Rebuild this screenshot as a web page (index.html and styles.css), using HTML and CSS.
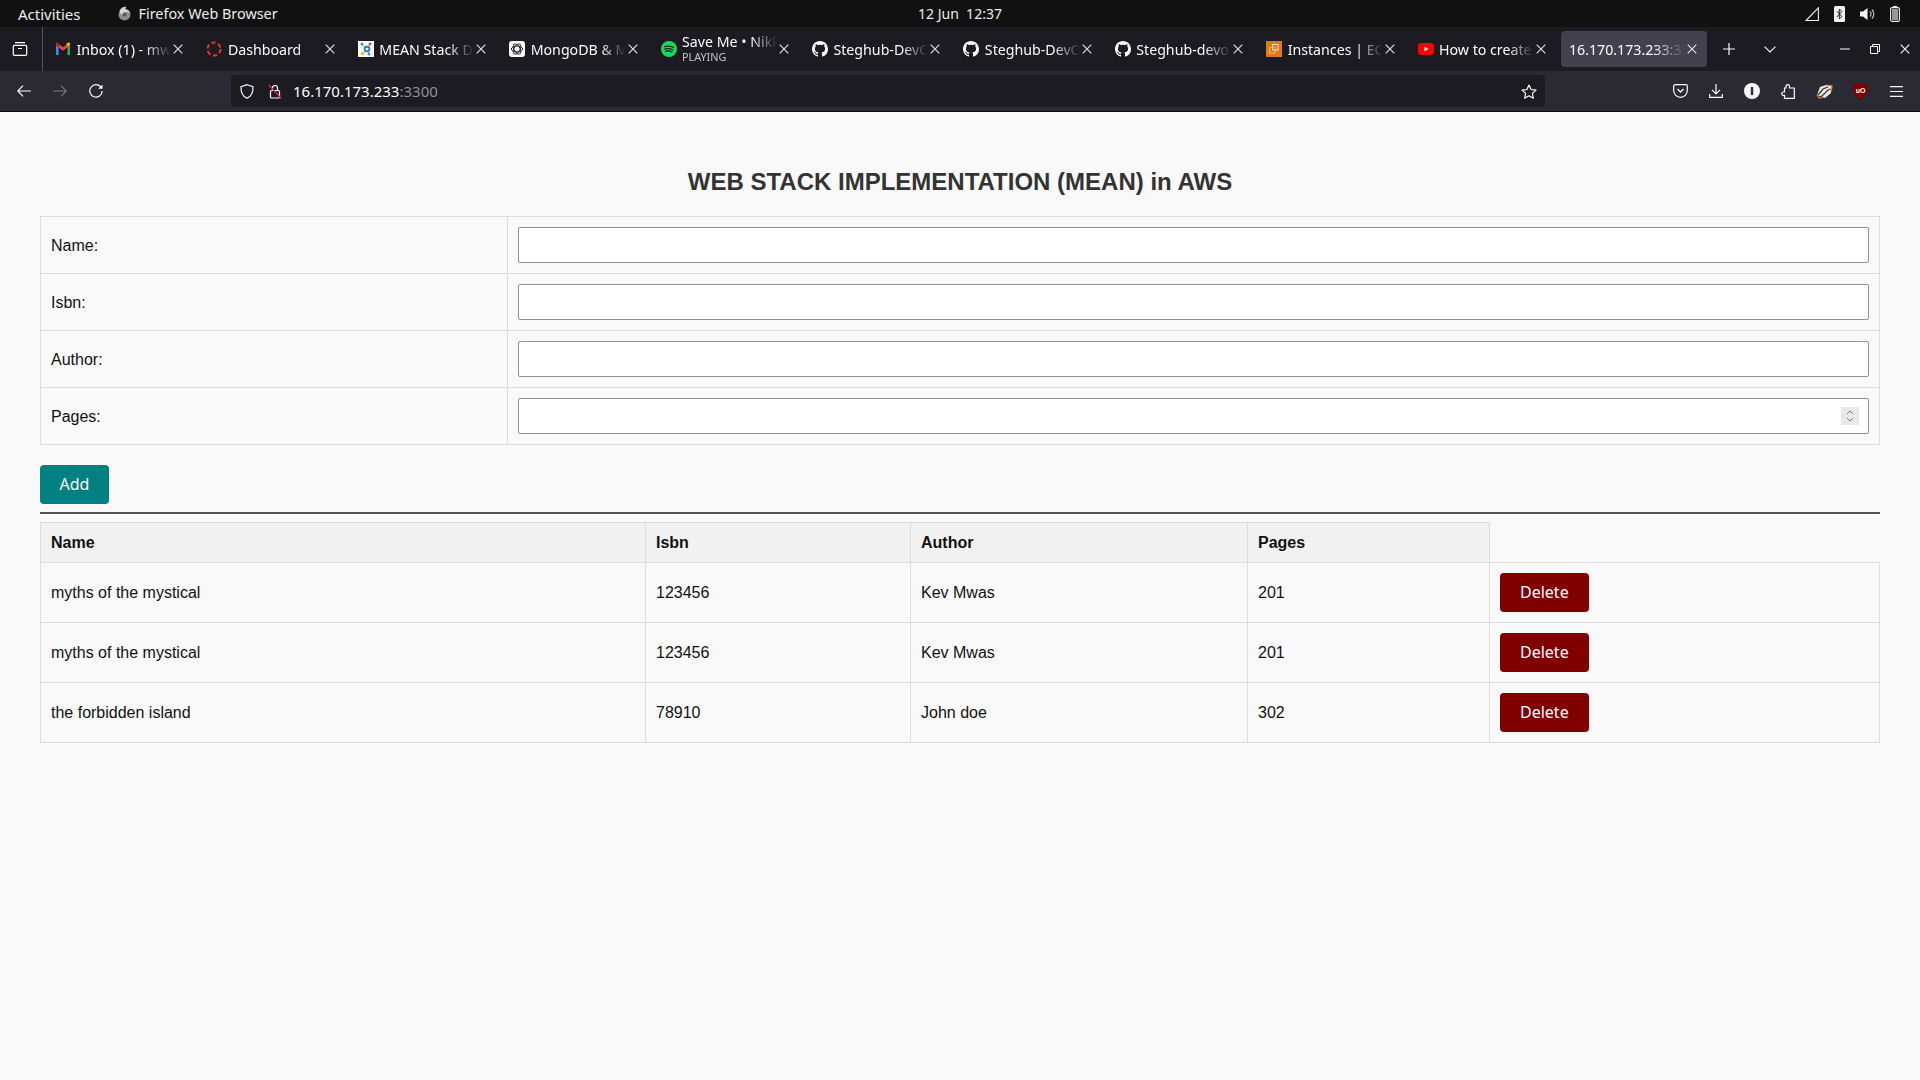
FILE: index.html
```html
<!DOCTYPE html>
<html lang="en">
<head>
    <meta charset="UTF-8">
    <title>MEAN Stack</title>
    <link rel="stylesheet" href="styles.css">
</head>
<body>
    <svg class="sprite" xmlns="http://www.w3.org/2000/svg">
        <symbol id="x" viewBox="0 0 10 10"><path d="M.7.7l8.6 8.6M9.3.7L.7 9.3" fill="none" stroke="currentColor" stroke-width="1.1"/></symbol>
        <symbol id="gh" viewBox="0 0 16 16"><path fill="#fbfbfe" d="M8 0C3.58 0 0 3.58 0 8c0 3.54 2.29 6.53 5.47 7.59.4.07.55-.17.55-.38 0-.19-.01-.82-.01-1.49-2.01.37-2.53-.49-2.69-.94-.09-.23-.48-.94-.82-1.13-.28-.15-.68-.52-.01-.53.63-.01 1.08.58 1.23.82.72 1.21 1.87.87 2.33.66.07-.52.28-.87.51-1.07-1.78-.2-3.64-.89-3.64-3.95 0-.87.31-1.59.82-2.15-.08-.2-.36-1.02.08-2.12 0 0 .67-.21 2.2.82.64-.18 1.32-.27 2-.27s1.36.09 2 .27c1.53-1.04 2.2-.82 2.2-.82.44 1.1.16 1.92.08 2.12.51.56.82 1.27.82 2.15 0 3.07-1.87 3.75-3.65 3.95.29.25.54.73.54 1.48 0 1.07-.01 1.93-.01 2.2 0 .21.15.46.55.38A8.01 8.01 0 0016 8c0-4.42-3.58-8-8-8z"/></symbol>
    </svg>

    <!-- ubuntu top bar -->
    <div class="topbar">
        <div class="topbar-left">
            <span class="activities">Activities</span>
            <svg class="ff-icon" width="15" height="15" viewBox="0 0 16 16"><circle cx="8" cy="9" r="6.4" fill="#8d8d8d"/><path d="M3 5C4 2 7 .5 10 1c-1 1-1.500 2-1 3 2 .3 4 1.500 5 4-1-1-3-2-5-1.500C7 7 6 8.500 7 10c-2 0-4-2-4-5z" fill="#d6d6d6"/><circle cx="8" cy="9" r="2.200" fill="#5a5a5a"/></svg>
            <span class="app-name">Firefox Web Browser</span>
        </div>
        <div class="clock">12 Jun&nbsp; 12:37</div>
        <div class="status-icons">
            <svg width="14" height="14" viewBox="0 0 14 14"><path d="M13.400.8v12.700H.9z" fill="none" stroke="#eee" stroke-width="1.100"/></svg>
            <svg width="11" height="16" viewBox="0 0 11 16"><rect width="11" height="16" rx="1.500" fill="#f2f2f2"/><path d="M2.800 5l5 5.500-2.500 2.500V3l2.500 2.500-5 5.500" fill="none" stroke="#222" stroke-width="1"/></svg>
            <svg width="15" height="14" viewBox="0 0 15 14"><path d="M0 4.500h3L7.500 1v12L3 9.500H0z" fill="#f2f2f2"/><path d="M10 4.500a3.500 3.500 0 010 5M12 2.500a6.500 6.500 0 010 9" fill="none" stroke="#bbb" stroke-width="1.200"/></svg>
            <svg width="10" height="16" viewBox="0 0 10 16"><rect x="3" width="4" height="2" fill="#eee"/><rect x=".6" y="1.600" width="8.800" height="13.800" rx="1.500" fill="none" stroke="#eee" stroke-width="1.100"/><rect x="2" y="3" width="6" height="11" fill="#999"/></svg>
        </div>
    </div>

    <!-- firefox tabs -->
    <div class="tabbar">
        <div class="tab-view">
            <svg width="16" height="14" viewBox="0 0 16 14"><path d="M3 .7h10M1.300 4.300c0-.6.4-1 1-1h11.400c.6 0 1 .4 1 1v8c0 .6-.4 1-1 1H2.300c-.6 0-1-.4-1-1zM6 6.500h4" fill="none" stroke="#fbfbfe" stroke-width="1.200"/></svg>
        </div>
        <div class="tabs">
            <div class="tab">
                <svg class="favicon" width="16" height="16" viewBox="0 0 16 16"><path d="M1 14V4l2.600 2v8z" fill="#4285f4"/><path d="M12.400 14V6L15 4v10z" fill="#34a853"/><path d="M12.400 6L15 4V3c0-1.200-1.400-1.900-2.400-1.100L11 3z" fill="#fbbc04"/><path d="M3.600 6.500V3L8 6.300 12.400 3v3.500L8 9.800z" fill="#ea4335"/><path d="M1 4l2.600 2.500V3L3.400 1.900C2.400 1.100 1 1.800 1 3z" fill="#c5221f"/></svg>
                <span class="tab-label">Inbox (1) - mwas</span>
                <svg class="tab-close"><use href="#x"/></svg>
            </div>
            <div class="tab">
                <svg class="favicon" width="16" height="16" viewBox="0 0 16 16"><circle cx="8" cy="8" r="6.500" fill="none" stroke="#e2332c" stroke-width="2.200" stroke-dasharray="4.200 2.600"/></svg>
                <span class="tab-label">Dashboard</span>
                <svg class="tab-close"><use href="#x"/></svg>
            </div>
            <div class="tab">
                <svg class="favicon" width="16" height="16" viewBox="0 0 16 16"><rect width="16" height="16" fill="#fff"/><path d="M4 3l4 4M12 3L9 7M9 9l-4 4M10 10l1 3" stroke="#8ab4f8" stroke-width="1"/><circle cx="9" cy="8" r="2.400" fill="none" stroke="#1a73e8" stroke-width="1.800"/><circle cx="4" cy="3" r="1.500" fill="#34a853"/><circle cx="12" cy="3" r="1.500" fill="#ea4335"/><circle cx="4.500" cy="12.500" r="1.700" fill="#fbbc04"/><circle cx="11" cy="13" r="1.500" fill="#4285f4"/></svg>
                <span class="tab-label">MEAN Stack Dev</span>
                <svg class="tab-close"><use href="#x"/></svg>
            </div>
            <div class="tab">
                <svg class="favicon" width="16" height="16" viewBox="0 0 16 16"><rect width="16" height="16" rx="3" fill="#fff"/><g fill="none" stroke="#222" stroke-width="1"><ellipse cx="8" cy="8" rx="5.600" ry="3"/><ellipse cx="8" cy="8" rx="5.600" ry="3" transform="rotate(60 8 8)"/><ellipse cx="8" cy="8" rx="5.600" ry="3" transform="rotate(120 8 8)"/></g></svg>
                <span class="tab-label">MongoDB &amp; Mon</span>
                <svg class="tab-close"><use href="#x"/></svg>
            </div>
            <div class="tab">
                <svg class="favicon" width="16" height="16" viewBox="0 0 16 16"><circle cx="8" cy="8" r="8" fill="#1ed760"/><path d="M3.500 5.600c3-.8 6.200-.6 9 .8M4 8c2.600-.6 5.400-.4 7.800.8M4.500 10.300c2.200-.5 4.500-.3 6.400.7" fill="none" stroke="#1c2b20" stroke-width="1.300" stroke-linecap="round"/></svg>
                <span class="tab-label tab-label-2">Save Me • Nikki<small>PLAYING</small></span>
                <svg class="tab-close"><use href="#x"/></svg>
            </div>
            <div class="tab">
                <svg class="favicon" width="16" height="16"><use href="#gh"/></svg>
                <span class="tab-label">Steghub-DevOps</span>
                <svg class="tab-close"><use href="#x"/></svg>
            </div>
            <div class="tab">
                <svg class="favicon" width="16" height="16"><use href="#gh"/></svg>
                <span class="tab-label">Steghub-DevOps</span>
                <svg class="tab-close"><use href="#x"/></svg>
            </div>
            <div class="tab">
                <svg class="favicon" width="16" height="16"><use href="#gh"/></svg>
                <span class="tab-label">Steghub-devops</span>
                <svg class="tab-close"><use href="#x"/></svg>
            </div>
            <div class="tab">
                <svg class="favicon" width="16" height="16" viewBox="0 0 16 16"><rect width="16" height="16" fill="#dd7a14"/><g fill="none" stroke="#f8dcb8" stroke-width="1"><rect x="6.500" y="3.500" width="5.500" height="5.500"/><rect x="3.500" y="6.500" width="5.500" height="5.500" opacity=".6"/></g></svg>
                <span class="tab-label">Instances | EC2</span>
                <svg class="tab-close"><use href="#x"/></svg>
            </div>
            <div class="tab">
                <svg class="favicon" width="16" height="16" viewBox="0 0 16 16"><rect y="2" width="16" height="12" rx="3.200" fill="#f00"/><path d="M6.500 5.700L10.500 8l-4 2.300z" fill="#fff"/></svg>
                <span class="tab-label">How to create</span>
                <svg class="tab-close"><use href="#x"/></svg>
            </div>
            <div class="tab active">
                <span class="tab-label">16.170.173.233:3300</span>
                <svg class="tab-close"><use href="#x"/></svg>
            </div>
        </div>
        <div class="tab-extra">
            <svg width="12" height="12" viewBox="0 0 12 12"><path d="M6 0v12M0 6h12" stroke="#fbfbfe" stroke-width="1.200"/></svg>
            <svg width="12" height="7" viewBox="0 0 12 7"><path d="M.5.7L6 6 11.500.7" fill="none" stroke="#fbfbfe" stroke-width="1.100"/></svg>
        </div>
        <div class="window-btns">
            <svg width="10" height="10" viewBox="0 0 10 10"><path d="M0 5h10" stroke="#fbfbfe" stroke-width="1"/></svg>
            <svg width="10" height="10" viewBox="0 0 10 10"><path d="M.5 2.500h7v7h-7zM2.500 2.500v-2h7v7h-2" fill="none" stroke="#fbfbfe" stroke-width="1"/></svg>
            <svg width="10" height="10"><use href="#x"/></svg>
        </div>
    </div>

    <!-- firefox nav bar -->
    <div class="navbar">
        <div class="nav-btn"><svg width="14" height="12" viewBox="0 0 14 12"><path d="M14 6H1M6 .7L.8 6 6 11.300" fill="none" stroke="#fbfbfe" stroke-width="1.200"/></svg></div>
        <div class="nav-btn"><svg width="14" height="12" viewBox="0 0 14 12"><path d="M0 6h13M8 .7L13.200 6 8 11.300" fill="none" stroke="#77767e" stroke-width="1.200"/></svg></div>
        <div class="nav-btn"><svg width="14" height="14" viewBox="0 0 14 14"><path d="M12.200 3.500A6.200 6.200 0 1013.200 7" fill="none" stroke="#fbfbfe" stroke-width="1.200"/><path d="M13.500.5v4.300H9.200z" fill="#fbfbfe"/></svg></div>
        <div class="urlbar">
            <svg class="url-shield" width="14" height="15" viewBox="0 0 14 15"><path d="M7 .7l6 2c.2 5-1.500 9.500-6 11.600C2.500 12.200.8 7.700 1 2.700z" fill="none" stroke="#fbfbfe" stroke-width="1.200"/></svg>
            <svg class="url-lock" width="14" height="15" viewBox="0 0 14 15"><path d="M3.500 6.500h7c.6 0 1 .4 1 1v5.500c0 .6-.4 1-1 1h-7c-.6 0-1-.4-1-1V7.500c0-.6.400-1 1-1zM4.500 6.500V4a2.500 2.500 0 015 0v2.500" fill="none" stroke="#fbfbfe" stroke-width="1.200"/><path d="M.8 1l12.500 13.500" stroke="#e22850" stroke-width="1.300"/></svg>
            <span class="url-text">16.170.173.233<span class="url-port">:3300</span></span>
            <svg class="url-star" width="16" height="15" viewBox="0 0 16 15"><path d="M8 1l2.100 4.500 4.900.6-3.600 3.300.9 4.800L8 11.800l-4.300 2.400.9-4.800L1 6.100l4.900-.6z" fill="none" stroke="#fbfbfe" stroke-width="1.200" stroke-linejoin="round"/></svg>
        </div>
        <div class="nav-right">
            <div class="nav-btn"><svg width="15" height="14" viewBox="0 0 15 14"><path d="M2 .7h11c.7 0 1.300.6 1.300 1.300v4.500a6.800 6.800 0 01-13.600 0V2C.7 1.300 1.300.7 2 .7z" fill="none" stroke="#fbfbfe" stroke-width="1.200"/><path d="M4.500 5L7.500 8l3-3" fill="none" stroke="#fbfbfe" stroke-width="1.300"/></svg></div>
            <div class="nav-btn"><svg width="14" height="14" viewBox="0 0 14 14"><path d="M7 0v9.500M3 5.800L7 9.800l4-4M.7 10v3.300h12.600V10" fill="none" stroke="#fbfbfe" stroke-width="1.200"/></svg></div>
            <div class="nav-btn"><svg width="16" height="16" viewBox="0 0 16 16"><circle cx="8" cy="8" r="8" fill="#fbfbfe"/><rect x="6.800" y="4" width="2.400" height="8" rx=".6" fill="#2b2a33"/></svg></div>
            <div class="nav-btn"><svg width="14" height="15" viewBox="0 0 14 15"><path d="M5 2.500C5 1.500 5.800.7 6.800.7s1.700.8 1.700 1.800V4h4.800v10.300H3.500v-3H2.200C1.300 11.300.7 10.600.7 9.700S1.300 8 2.200 8h1.300V4H5z" fill="none" stroke="#fbfbfe" stroke-width="1.200"/></svg></div>
            <div class="nav-btn"><svg width="17" height="15" viewBox="0 0 17 15"><path d="M1 11L4 3l6-2 6 1-1 7-6 5z" fill="#ece7df"/><path d="M2 11l5-6 5-2M5 13l7-7 3-1" fill="none" stroke="#3b3632" stroke-width="1.300"/><path d="M1 11l2 3 4-.5M10 1l6 1-.5 4" fill="none" stroke="#d98a3a" stroke-width="1.200"/></svg></div>
            <div class="nav-btn"><svg width="15" height="16" viewBox="0 0 15 16"><path d="M7.500 0L15 2c.2 6-1.500 11-7.500 14C1.500 13 -.2 8 0 2z" fill="#800000"/><text class="ublock-text" x="7.500" y="9.500" text-anchor="middle">uO</text></svg></div>
            <div class="nav-btn"><svg width="13" height="11" viewBox="0 0 13 11"><path d="M0 .7h13M0 5.500h13M0 10.300h13" stroke="#fbfbfe" stroke-width="1.200"/></svg></div>
        </div>
    </div>

    <!-- the page itself -->
    <div class="page">
        <h2 class="page-title">WEB STACK IMPLEMENTATION (MEAN) in AWS</h2>

        <table class="book-form">
            <colgroup><col class="col-label"><col></colgroup>
            <tr>
                <td class="form-label">Name:</td>
                <td><input type="text" class="field"></td>
            </tr>
            <tr>
                <td class="form-label">Isbn:</td>
                <td><input type="text" class="field"></td>
            </tr>
            <tr>
                <td class="form-label">Author:</td>
                <td><input type="text" class="field"></td>
            </tr>
            <tr>
                <td class="form-label">Pages:</td>
                <td>
                    <div class="number-wrap">
                        <input type="text" class="field">
                        <span class="spinner"><svg width="8" height="14" viewBox="0 0 8 14"><path d="M1 5l3-3 3 3M1 9l3 3 3-3" fill="none" stroke="#77767e" stroke-width="1"/></svg></span>
                    </div>
                </td>
            </tr>
        </table>

        <button class="btn btn-add">Add</button>
        <hr class="divider">

        <table class="book-list">
            <colgroup><col class="col-name"><col class="col-isbn"><col class="col-author"><col class="col-pages"><col></colgroup>
            <thead>
                <tr>
                    <th>Name</th>
                    <th>Isbn</th>
                    <th>Author</th>
                    <th>Pages</th>
                    <th class="th-empty"></th>
                </tr>
            </thead>
            <tbody>
                <tr>
                    <td>myths of the mystical</td>
                    <td>123456</td>
                    <td>Kev Mwas</td>
                    <td>201</td>
                    <td><button class="btn btn-delete">Delete</button></td>
                </tr>
                <tr>
                    <td>myths of the mystical</td>
                    <td>123456</td>
                    <td>Kev Mwas</td>
                    <td>201</td>
                    <td><button class="btn btn-delete">Delete</button></td>
                </tr>
                <tr>
                    <td>the forbidden island</td>
                    <td>78910</td>
                    <td>John doe</td>
                    <td>302</td>
                    <td><button class="btn btn-delete">Delete</button></td>
                </tr>
            </tbody>
        </table>
    </div>
</body>
</html>
```

FILE: styles.css
```css
html, body {
    height: 100%;
}
body {
    margin: 0;
    display: flex;
    flex-direction: column;
    overflow: hidden;
    background-color: #f9f9f9;
    font-family: "Liberation Sans", Arial, sans-serif;
    font-size: 16px;
    color: #111;
}
.sprite {
    display: none;
}

/* top bar */
.topbar {
    height: 27px;
    flex: none;
    display: grid;
    grid-template-columns: 1fr auto 1fr;
    align-items: center;
    background-color: #111;
    color: #ececec;
    font-family: "Noto Sans", sans-serif;
    font-size: 14.4px;
}
.topbar-left {
    display: flex;
    align-items: center;
    padding-left: 18px;
}
.activities {
    font-size: 15px;
}
.ff-icon {
    margin-left: 36px;
    margin-right: 7px;
}
.clock {
    font-size: 14px;
}
.status-icons {
    display: flex;
    align-items: center;
    justify-content: flex-end;
    gap: 15px;
    padding-right: 20px;
}

/* tabs */
.tabbar {
    height: 44px;
    flex: none;
    display: flex;
    align-items: center;
    background-color: #1c1b22;
    color: #fbfbfe;
    font-family: "Noto Sans", sans-serif;
    font-size: 14.2px;
}
.tab-view {
    width: 40px;
    height: 44px;
    flex: none;
    display: flex;
    align-items: center;
    justify-content: center;
    padding-right: 2px;
    border-right: 1px solid #55545c;
}
.tabs {
    display: flex;
    flex: none;
}
.tab {
    width: 151.4px;
    height: 36px;
    box-sizing: border-box;
    display: flex;
    align-items: center;
    padding: 0 11px 0 12px;
    position: relative;
}
.tab.active::before {
    content: "";
    position: absolute;
    top: 0;
    bottom: 0;
    left: 4px;
    right: 1px;
    background-color: #42414d;
    border-radius: 4px;
}
.tab.active > * {
    position: relative;
}
.favicon {
    flex: none;
    margin-right: 5.5px;
}
.tab-label {
    flex: 1;
    min-width: 0;
    padding-top: 1px;
    overflow: hidden;
    white-space: nowrap;
    -webkit-mask-image: linear-gradient(to right, #000 72%, transparent 100%);
    mask-image: linear-gradient(to right, #000 72%, transparent 100%);
}
.tab-label-2 {
    padding-top: 0;
    line-height: 16px;
}
.tab-label small {
    display: block;
    font-size: 10.8px;
    line-height: 14px;
    color: #c4c4c8;
}
.tab-close {
    flex: none;
    width: 10px;
    height: 10px;
    margin-left: 2px;
    color: #e6e6ea;
}
.tab-extra {
    display: flex;
    align-items: center;
    gap: 29px;
    margin-left: 15px;
}
.window-btns {
    display: flex;
    align-items: center;
    gap: 20px;
    margin-left: auto;
    padding-right: 10px;
}

/* toolbar */
.navbar {
    height: 40px;
    flex: none;
    display: flex;
    align-items: center;
    padding: 0 6px;
    background-color: #2b2a33;
    border-bottom: 1px solid #0c0c0d;
}
.nav-btn {
    width: 36px;
    height: 32px;
    display: flex;
    align-items: center;
    justify-content: center;
}
.urlbar {
    width: 1314px;
    height: 32px;
    margin-left: 117px;
    display: flex;
    align-items: center;
    padding: 0 8px 0 9px;
    box-sizing: border-box;
    background-color: #1c1b22;
    border-radius: 4px;
    color: #fbfbfe;
    font-family: "Noto Sans", sans-serif;
    font-size: 15px;
}
.url-lock {
    margin-left: 14px;
}
.url-text {
    margin-left: 11px;
}
.url-port {
    color: #8f8f9d;
}
.url-star {
    margin-left: auto;
}
.nav-right {
    display: flex;
    margin-left: auto;
}
.ublock-text {
    font-family: "Liberation Sans", sans-serif;
    font-size: 7px;
    font-weight: bold;
    fill: #fff;
}

/* page */
.page {
    flex: 1;
    padding: 0 40px;
}
.page-title {
    margin: 0;
    height: 104px;
    box-sizing: border-box;
    padding-top: 55px;
    text-align: center;
    font-size: 24px;
    line-height: 30px;
    color: #333;
}
table {
    width: 100%;
    border-collapse: collapse;
    table-layout: fixed;
}
td, th {
    border: 1px solid #ddd;
    padding: 10px;
    text-align: left;
}
.col-label {
    width: 467px;
}
.book-form td {
    height: 36px;
}
.book-form td.form-label {
    padding-top: 11px;
    padding-bottom: 9px;
}
.field {
    display: block;
    width: 100%;
    height: 36px;
    box-sizing: border-box;
    border: 1px solid #8f8f9d;
    border-radius: 2px;
    background: #fff;
    padding: 0 8px;
}
.number-wrap {
    position: relative;
}
.spinner {
    position: absolute;
    top: 9px;
    right: 10px;
    width: 18px;
    height: 18px;
    display: flex;
    align-items: center;
    justify-content: center;
    background-color: #e9e9ed;
}
.btn {
    display: block;
    height: 39px;
    padding: 0 20px 2px;
    border: none;
    border-radius: 4px;
    color: #fff;
    font-family: "Noto Sans", sans-serif;
    font-size: 16px;
    cursor: pointer;
}
.btn-add {
    margin-top: 20px;
    width: 69px;
    padding-left: 0;
    padding-right: 0;
    background-color: #008080;
}
.btn-delete {
    background-color: #800000;
}
.divider {
    height: 2px;
    margin: 8px 0;
    border: none;
    background-color: #555;
}
.col-name {
    width: 605px;
}
.col-isbn {
    width: 265px;
}
.col-author {
    width: 337px;
}
.col-pages {
    width: 242px;
}
.book-list th {
    height: 20px;
    padding: 10px 10px 9px;
    background-color: #f1f1f1;
    font-weight: bold;
}
.book-list th.th-empty {
    background: none;
    border-top: none;
    border-right: none;
}
```
